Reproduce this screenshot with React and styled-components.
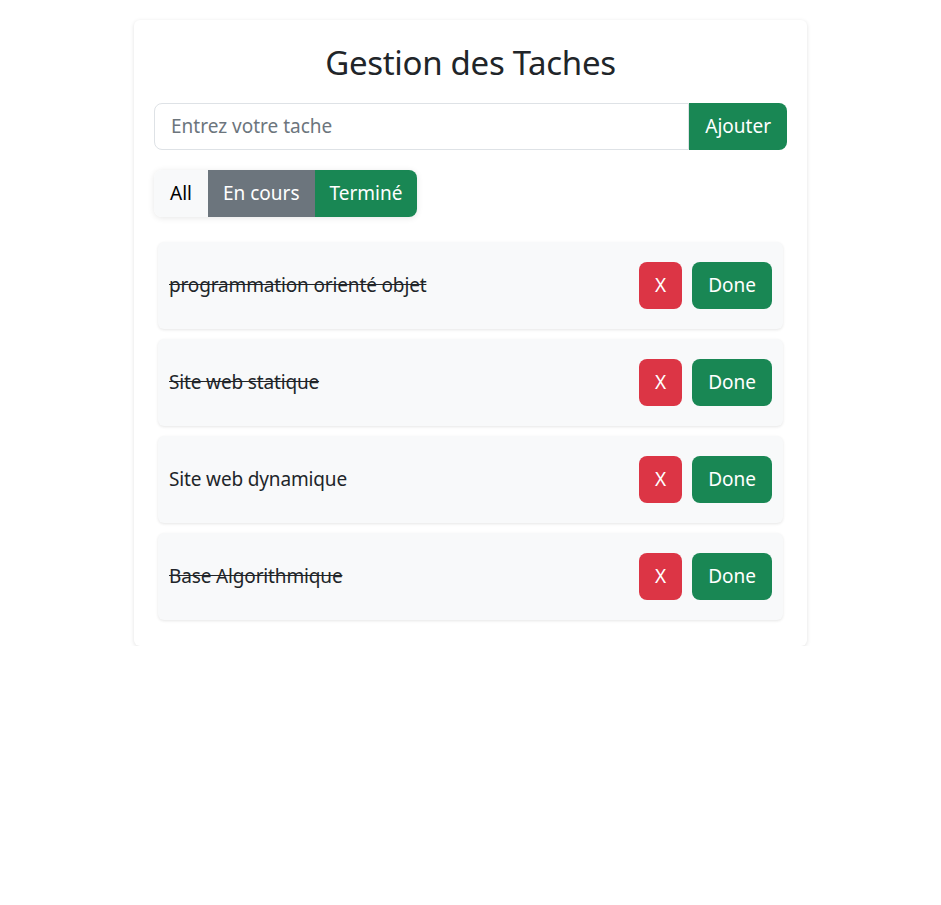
import React from 'react';
import styled, { createGlobalStyle } from 'styled-components';

const GlobalStyle = createGlobalStyle`
  body {
    margin: 0;
    background: #fff;
    font-family: "Noto Sans", "Open Sans", sans-serif;
    color: #212529;
  }
  * { box-sizing: border-box; }
`;

const Page = styled.div`
  display: flex;
  justify-content: center;
  padding-top: 20px;
`;

const Card = styled.div`
  width: 673px;
  background: #fff;
  border-radius: 6px;
  box-shadow: 0 1px 4px rgba(0, 0, 0, 0.12);
  padding: 23px 20px 26px;
`;

const Title = styled.h2`
  margin: 0 0 20px;
  text-align: center;
  font-weight: 400;
  font-size: 33px;
  line-height: 1.2;
  letter-spacing: -0.3px;
`;

const InputGroup = styled.div`
  display: flex;
  height: 47px;
  margin-bottom: 20px;
`;

const Input = styled.input`
  flex: 1;
  min-width: 0;
  border: 1px solid #dee2e6;
  border-radius: 8px 0 0 8px;
  padding: 0 16px;
  font-family: inherit;
  font-size: 19px;
  color: #212529;
  outline: none;
  &::placeholder { color: #6c757d; }
`;

const colors = {
  success: ['#198754', '#fff'],
  danger: ['#dc3545', '#fff'],
  secondary: ['#6c757d', '#fff'],
  light: ['#f8f9fa', '#000'],
};

const Button = styled.button`
  border: none;
  height: 47px;
  padding: 0 ${(p) => p.$px || 16}px;
  font-family: inherit;
  font-size: 19px;
  background: ${(p) => colors[p.$variant][0]};
  color: ${(p) => colors[p.$variant][1]};
  border-radius: ${(p) => p.$radius || '8px'};
  cursor: pointer;
`;

const Group = styled.div`
  display: inline-flex;
  border-radius: 8px;
  box-shadow: 0 1px 6px rgba(0, 0, 0, 0.1);
  margin-bottom: 25px;
  overflow: hidden;
`;

const List = styled.div`
  display: flex;
  flex-direction: column;
  gap: 10px;
  padding: 0 4px;
`;

const Item = styled.div`
  display: flex;
  align-items: center;
  justify-content: space-between;
  height: 87px;
  padding: 0 11px;
  background: #f8f9fa;
  border-radius: 6px;
  box-shadow: 0 1px 3px rgba(0, 0, 0, 0.1);
`;

const Label = styled.span`
  font-size: 19px;
  letter-spacing: -0.15px;
  text-decoration: ${(p) => (p.$done ? 'line-through' : 'none')};
`;

const Actions = styled.div`
  display: flex;
  gap: 10px;
`;

const tasks = [
  { name: 'programmation orienté objet', done: true },
  { name: 'Site web statique', done: true },
  { name: 'Site web dynamique', done: false },
  { name: 'Base Algorithmique', done: true },
];

export default function App() {
  return (
    <>
      <GlobalStyle />
      <Page>
        <Card>
          <Title>Gestion des Taches</Title>
          <InputGroup>
            <Input placeholder="Entrez votre tache" />
            <Button $variant="success" $radius="0 8px 8px 0">Ajouter</Button>
          </InputGroup>
          <Group>
            <Button $variant="light" $radius="0" $px={16}>All</Button>
            <Button $variant="secondary" $radius="0" $px={15}>En cours</Button>
            <Button $variant="success" $radius="0" $px={15}>Terminé</Button>
          </Group>
          <List>
            {tasks.map((t) => (
              <Item key={t.name}>
                <Label $done={t.done}>{t.name}</Label>
                <Actions>
                  <Button $variant="danger" $px={16}>X</Button>
                  <Button $variant="success">Done</Button>
                </Actions>
              </Item>
            ))}
          </List>
        </Card>
      </Page>
    </>
  );
}
